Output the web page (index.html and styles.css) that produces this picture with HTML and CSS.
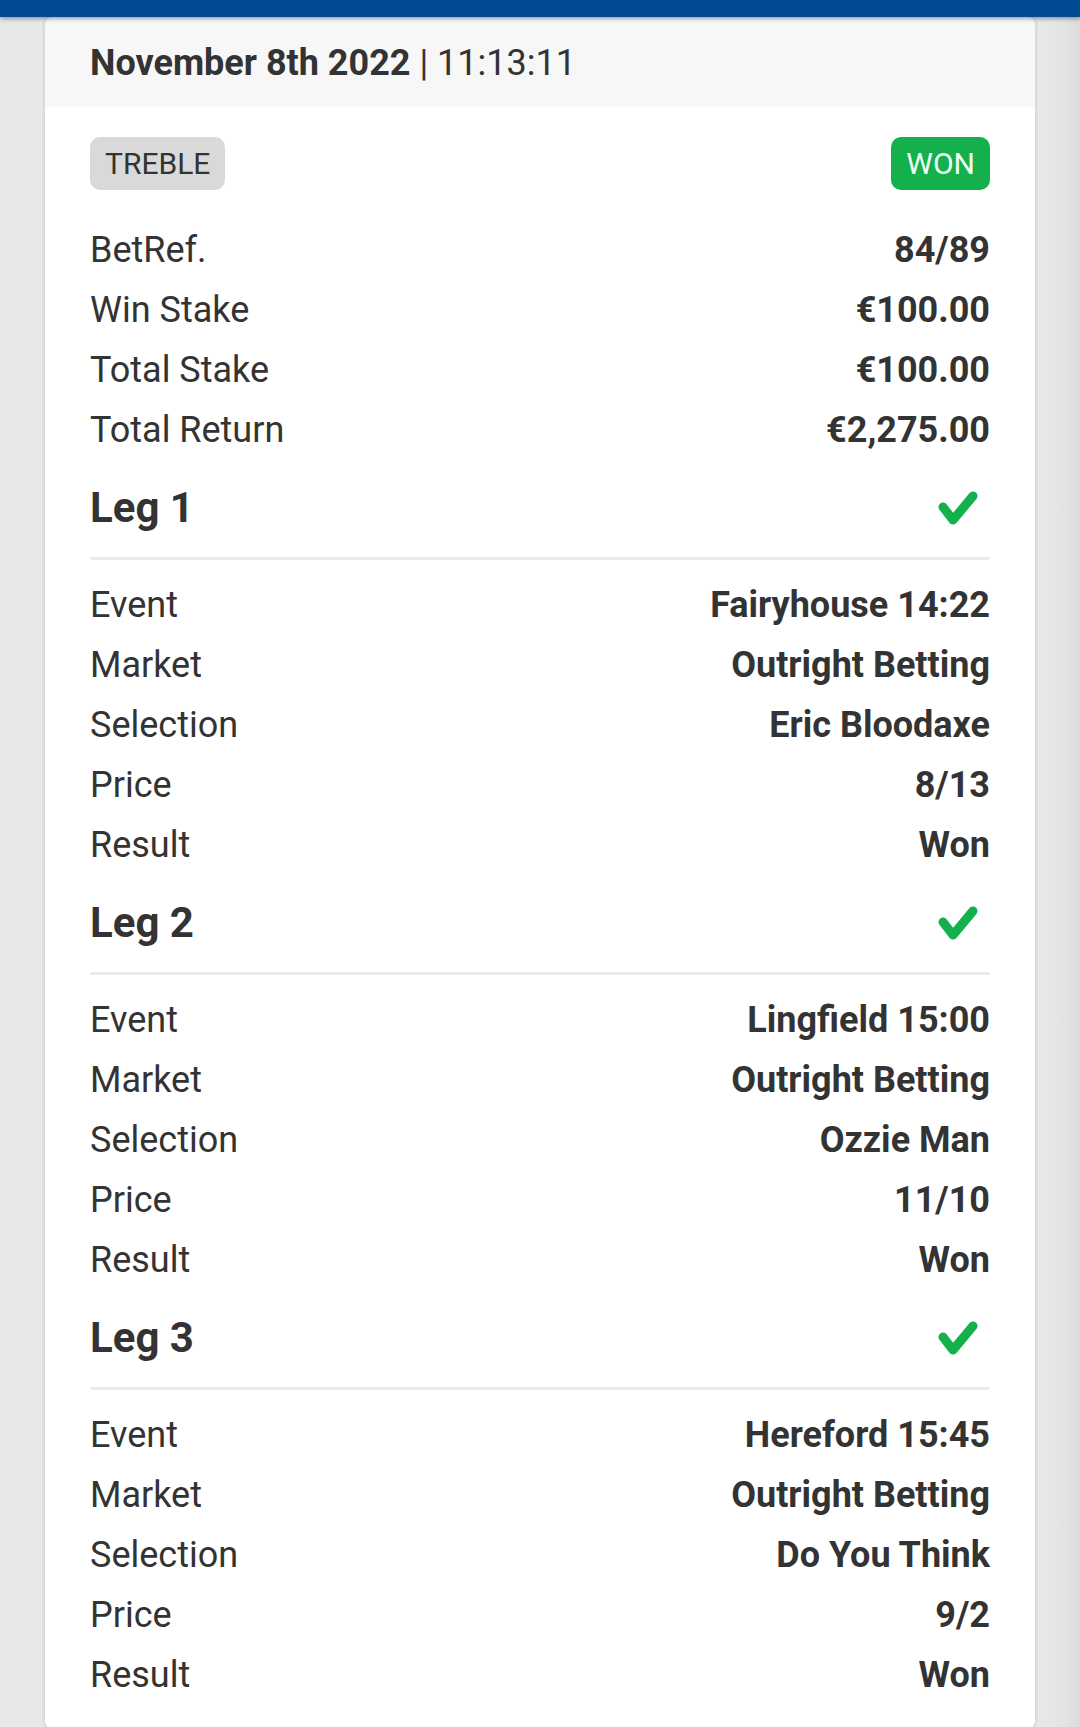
FILE: index.html
```html
<!DOCTYPE html>
<html lang="en">
<head>
    <meta charset="UTF-8" />
    <title>Bet Receipt</title>
    <link rel="stylesheet" href="styles.css">
</head>
<body>
    <div class="topbar"></div>
    <div class="card">
        <div class="card-head">
            <b>November 8th 2022</b>&nbsp;| 11:13:11
        </div>
        <div class="card-body">
            <div class="badges">
                <span class="badge badge-type">TREBLE</span>
                <span class="badge badge-won">WON</span>
            </div>
            <div class="rows">
                <div class="row"><span>BetRef.</span><b>84/89</b></div>
                <div class="row"><span>Win Stake</span><b>€100.00</b></div>
                <div class="row"><span>Total Stake</span><b>€100.00</b></div>
                <div class="row"><span>Total Return</span><b>€2,275.00</b></div>
            </div>

            <div class="leg">
                <div class="leg-head">
                    <h2>Leg 1</h2>
                    <svg class="tick" width="40" height="34" viewBox="0 0 40 34"><polyline points="5,16 15,29 35,5" /></svg>
                </div>
                <div class="rows">
                    <div class="row"><span>Event</span><b>Fairyhouse 14:22</b></div>
                    <div class="row"><span>Market</span><b>Outright Betting</b></div>
                    <div class="row"><span>Selection</span><b>Eric Bloodaxe</b></div>
                    <div class="row"><span>Price</span><b>8/13</b></div>
                    <div class="row"><span>Result</span><b>Won</b></div>
                </div>
            </div>

            <div class="leg">
                <div class="leg-head">
                    <h2>Leg 2</h2>
                    <svg class="tick" width="40" height="34" viewBox="0 0 40 34"><polyline points="5,16 15,29 35,5" /></svg>
                </div>
                <div class="rows">
                    <div class="row"><span>Event</span><b>Lingfield 15:00</b></div>
                    <div class="row"><span>Market</span><b>Outright Betting</b></div>
                    <div class="row"><span>Selection</span><b>Ozzie Man</b></div>
                    <div class="row"><span>Price</span><b>11/10</b></div>
                    <div class="row"><span>Result</span><b>Won</b></div>
                </div>
            </div>

            <div class="leg">
                <div class="leg-head">
                    <h2>Leg 3</h2>
                    <svg class="tick" width="40" height="34" viewBox="0 0 40 34"><polyline points="5,16 15,29 35,5" /></svg>
                </div>
                <div class="rows">
                    <div class="row"><span>Event</span><b>Hereford 15:45</b></div>
                    <div class="row"><span>Market</span><b>Outright Betting</b></div>
                    <div class="row"><span>Selection</span><b>Do You Think</b></div>
                    <div class="row"><span>Price</span><b>9/2</b></div>
                    <div class="row"><span>Result</span><b>Won</b></div>
                </div>
            </div>
        </div>
    </div>
</body>
</html>
```

FILE: styles.css
```css
body{
    margin: 0;
    background: linear-gradient(to right, #e8e8e8 1040px, #e5e5e5 1060px, #dcdcdc);
    font-family: Roboto, "Liberation Sans", sans-serif;
    color: #333;
    overflow: hidden;
}
.topbar{
    height: 17px;
    background: #014b93;
    box-shadow: 0 2px 4px rgba(0,0,0,.35);
    position: relative;
    z-index: 1;
}
.card{
    margin: 0 45px;
    background: #fff;
    border-radius: 8px;
    box-shadow: 0 0 4px rgba(0,0,0,.18);
    overflow: hidden;
}
.card-head{
    height: 90px;
    padding-left: 45px;
    padding-top: 2px;
    box-sizing: border-box;
    background: #f7f7f7;
    display: flex;
    align-items: center;
    font-size: 36px;
}
.card-head b{
    font-weight: 700;
}
.card-body{
    padding: 30px 45px 24px;
}
.badges{
    display: flex;
    justify-content: space-between;
    margin-bottom: 30px;
}
.badge{
    height: 53px;
    line-height: 53px;
    padding: 0 15px;
    border-radius: 10px;
    font-size: 30px;
}
.badge-type{
    background: #d9d9d9;
    color: #333;
}
.badge-won{
    background: #13b04b;
    color: #f2fff5;
}
.row{
    display: flex;
    justify-content: space-between;
    font-size: 36px;
    line-height: 60px;
}
.row b{
    font-weight: 700;
}
.leg-head{
    display: flex;
    justify-content: space-between;
    align-items: center;
    padding: 23px 12px 24px 0;
    border-bottom: 3px solid #ebebeb;
}
.leg-head h2{
    margin: 0;
    font-size: 42px;
    line-height: 50px;
    font-weight: 700;
}
.tick polyline{
    fill: none;
    stroke: #13b04b;
    stroke-width: 9;
    stroke-linecap: round;
    stroke-linejoin: round;
}
.leg .rows{
    padding-top: 15px;
}
```
